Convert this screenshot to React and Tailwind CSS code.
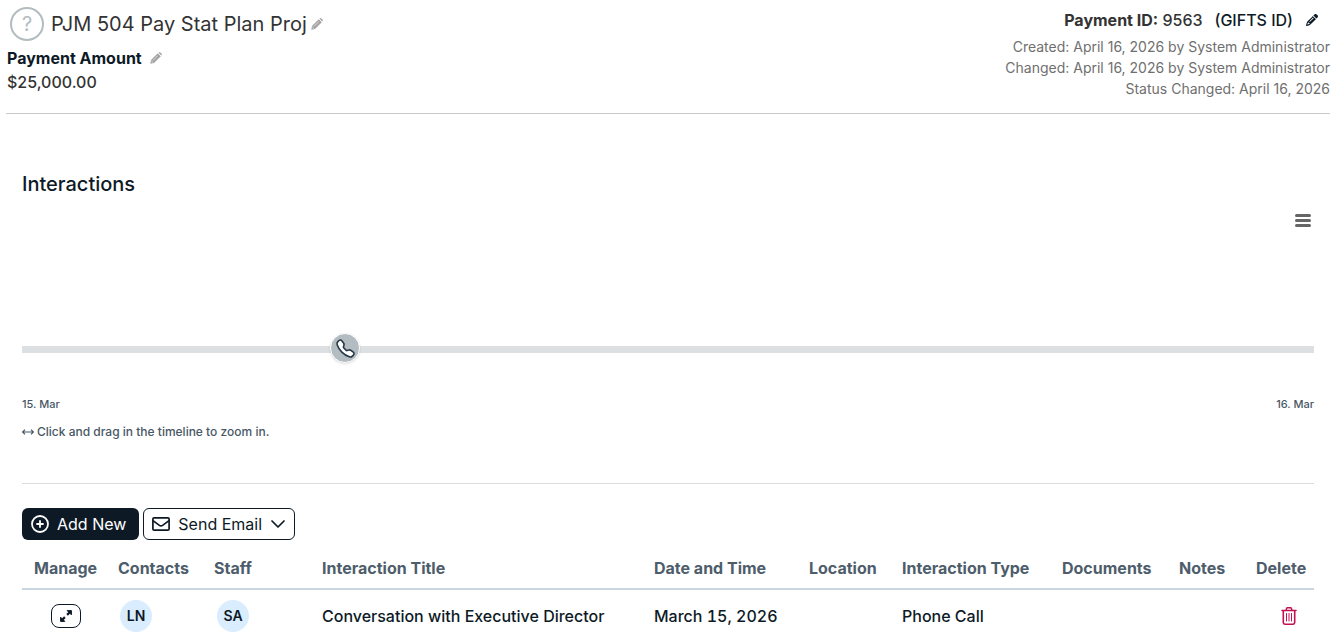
import { BsTelephoneFill } from 'react-icons/bs'
import { FaPencil } from 'react-icons/fa6'

const interactions = [
  {
    id: 1,
    contact: 'LN',
    staff: 'SA',
    title: 'Conversation with Executive Director',
    date: 'March 15, 2026',
    location: '',
    type: 'Phone Call',
  },
]

const history = [
  'Created: April 16, 2026 by System Administrator',
  'Changed: April 16, 2026 by System Administrator',
  'Status Changed: April 16, 2026',
]

function PencilIcon() {
  return (
    <svg viewBox="0 0 12 12" className="h-3 w-3" aria-hidden="true">
      <path d="M0.3 11.7 1 8 7.8 1.2 10.8 4.2 4 11Z" fill="#a3a3a3" />
      <path d="M8.4 0.7 9 0.3Q9.8 -0.1 10.4 0.5L11.5 1.6Q12.1 2.2 11.7 3L11.3 3.6Z" fill="#a3a3a3" />
      <path d="M3 8.4 7.8 3.6M1.4 9 3 10.6M7.8 0.8 11.2 4.2" stroke="#fff" strokeWidth="0.6" fill="none" />
    </svg>
  )
}

function PlusCircleIcon() {
  return (
    <svg viewBox="0 0 18 18" className="h-[18px] w-[18px]" fill="none" stroke="currentColor" strokeWidth="1.8" strokeLinecap="round" aria-hidden="true">
      <circle cx="9" cy="9" r="8" />
      <path d="M9 6v6M6 9h6" />
    </svg>
  )
}

function EnvelopeIcon() {
  return (
    <svg viewBox="0 0 18 14" className="h-[14px] w-[18px]" fill="none" stroke="currentColor" strokeWidth="1.7" strokeLinejoin="round" aria-hidden="true">
      <rect x="0.9" y="0.9" width="16.2" height="12.2" rx="1.2" />
      <path d="M1 3.6 7.4 8.4Q9 9.5 10.6 8.4L17 3.6" />
    </svg>
  )
}

function ChevronIcon() {
  return (
    <svg viewBox="0 0 14 8" className="ml-px h-2 w-[14px]" fill="none" stroke="currentColor" strokeWidth="1.7" strokeLinecap="round" strokeLinejoin="round" aria-hidden="true">
      <path d="M1 1 7 7 13 1" />
    </svg>
  )
}

function ExpandIcon() {
  return (
    <svg viewBox="0 0 12 12" className="h-3 w-3" fill="currentColor" stroke="currentColor" strokeLinejoin="round" aria-hidden="true">
      <path d="M7.2 0.6H11.4V4.8Z" />
      <path d="M0.6 7.2V11.4H4.8Z" />
      <path d="M10 2 7.1 4.9M4.9 7.1 2 10" strokeWidth="2.2" fill="none" />
    </svg>
  )
}

function TrashIcon() {
  return (
    <svg viewBox="0 0 16 18" className="h-[18px] w-4" fill="none" stroke="currentColor" strokeLinecap="round" aria-hidden="true">
      <path d="M1 3.4H15M5 3.2 5.6 1.4Q5.8 0.8 6.4 0.8H9.6Q10.2 0.8 10.4 1.4L11 3.2" strokeWidth="1.5" />
      <path d="M2.3 3.8V15.6Q2.3 17.2 3.9 17.2H12.1Q13.7 17.2 13.7 15.6V3.8" strokeWidth="1.6" />
      <path d="M5.5 6.5V14M8 6.5V14M10.5 6.5V14" strokeWidth="1" />
    </svg>
  )
}

function Avatar({ initials }) {
  return (
    <span className="flex h-8 w-8 items-center justify-center rounded-full bg-[#d9edff] text-sm font-semibold">{initials}</span>
  )
}

function Header() {
  return (
    <header className="ml-[6px] mr-3 flex h-[114px] justify-between border-b border-[#c8c8c8] text-[#333]">
      <div className="pl-px pt-[6px]">
        <div className="flex h-[35px] items-center">
          <span className="ml-[3px] flex h-[34px] w-[34px] items-center justify-center rounded-full border-2 border-[#b3bcc0] text-xl font-normal text-[#b3bcc0]">?</span>
          <h1 className="ml-[7px] text-xl font-normal">PJM 504 Pay Stat Plan Proj</h1>
          <button type="button" aria-label="Edit name" className="ml-1">
            <PencilIcon />
          </button>
        </div>
        <div className="mt-[5px] flex h-6 items-center">
          <h2 className="font-bold text-[#0d1a26]">Payment Amount</h2>
          <button type="button" aria-label="Edit payment amount" className="ml-2">
            <PencilIcon />
          </button>
        </div>
        <div>$25,000.00</div>
      </div>
      <div className="pt-2 text-right">
        <div className="flex items-center justify-end pr-3">
          <span><b>Payment ID:</b> 9563</span>
          <span className="ml-3 text-[#0d1a26]">(GIFTS ID)</span>
          <button type="button" aria-label="Edit payment ID" className="ml-[13px] text-[#0d1a26]">
            <FaPencil className="h-3 w-3" />
          </button>
        </div>
        <div className="mt-1 text-sm font-normal leading-[21px] text-[#6f6f6f]">
          {history.map((line) => (
            <div key={line}>{line}</div>
          ))}
        </div>
      </div>
    </header>
  )
}

function Timeline() {
  return (
    <div className="text-[#485766]">
      <div className="mt-4 flex justify-end pr-[3px]">
        <button type="button" aria-label="Chart menu" className="flex w-4 flex-col gap-[2px]">
          <span className="h-[3px] rounded-full bg-[#666]" />
          <span className="h-[3px] rounded-full bg-[#666]" />
          <span className="h-[3px] rounded-full bg-[#666]" />
        </button>
      </div>
      <div className="mt-[108px] flex h-[29px] items-center">
        <div className="relative h-[7px] w-full bg-[#dce0e3]">
          <button
            type="button"
            aria-label="Phone Call"
            className="absolute -top-[13px] left-1/4 flex h-[30px] w-[30px] -translate-x-1/2 items-center justify-center rounded-full border border-white bg-[#b3bcc0] shadow"
          >
            <BsTelephoneFill className="h-[17px] w-[17px] overflow-visible fill-white stroke-[#263746] stroke-[1.5px]" />
          </button>
        </div>
      </div>
      <div className="mt-8 flex justify-between text-[11px] leading-4">
        <span>15. Mar</span>
        <span>16. Mar</span>
      </div>
      <p className="mt-3 flex items-center gap-[3px] text-xs">
        <svg viewBox="0 0 12 6" className="h-[6px] w-3" fill="none" stroke="currentColor" aria-hidden="true">
          <path d="M0.8 3H11.2M3 0.6 0.6 3 3 5.4M9 0.6 11.4 3 9 5.4" strokeWidth="1.2" />
        </svg>
        Click and drag in the timeline to zoom in.
      </p>
    </div>
  )
}

function InteractionTable() {
  return (
    <table className="mt-[7px] w-full table-fixed text-left">
      <colgroup>
        <col className="w-[84px]" />
        <col className="w-[96px]" />
        <col className="w-[108px]" />
        <col />
        <col className="w-[155px]" />
        <col className="w-[93px]" />
        <col className="w-[160px]" />
        <col className="w-[117px]" />
        <col className="w-[77px]" />
        <col className="w-[70px]" />
      </colgroup>
      <thead>
        <tr className="h-[42px] border-b-2 border-[#c9d5e1] text-[#4d5d6b]">
          <th className="pl-3">Manage</th>
          <th className="pl-3">Contacts</th>
          <th className="pl-3">Staff</th>
          <th className="pl-3">Interaction Title</th>
          <th className="pl-3">Date and Time</th>
          <th className="pl-3">Location</th>
          <th className="pl-3">Interaction Type</th>
          <th className="pl-3">Documents</th>
          <th className="pl-3">Notes</th>
          <th className="pl-3">Delete</th>
        </tr>
      </thead>
      <tbody>
        {interactions.map((row) => (
          <tr key={row.id} className="h-[53px]">
            <td className="pl-[29px]">
              <button type="button" aria-label="Open interaction" className="flex h-6 w-[30px] items-center justify-center rounded-lg border border-[#0d1a26]">
                <ExpandIcon />
              </button>
            </td>
            <td className="pl-[14px]"><Avatar initials={row.contact} /></td>
            <td className="pl-[15px]"><Avatar initials={row.staff} /></td>
            <td className="pl-3">{row.title}</td>
            <td className="pl-3 tabular-nums">{row.date}</td>
            <td className="pl-3">{row.location}</td>
            <td className="pl-3">{row.type}</td>
            <td />
            <td />
            <td className="pl-[37px]">
              <button type="button" aria-label="Delete interaction" className="flex text-[#c2124f]">
                <TrashIcon />
              </button>
            </td>
          </tr>
        ))}
      </tbody>
    </table>
  )
}

export default function App() {
  return (
    <div className="bg-white font-['Inter',sans-serif] text-base font-medium text-[#0d1a26]">
      <Header />
      <main className="pl-[22px] pr-7 pt-14">
        <h2 className="text-xl">Interactions</h2>
        <Timeline />
        <div className="mt-[43px] flex gap-1 border-t border-[#dcdcdc] pt-6 font-normal">
          <button type="button" className="flex h-8 items-center gap-2 rounded-md bg-[#0d1a26] pl-[9px] pr-[13px] text-white">
            <PlusCircleIcon />
            Add New
          </button>
          <button type="button" className="flex h-8 items-center gap-2 rounded-md border border-[#0d1a26] pl-2 pr-[9px]">
            <EnvelopeIcon />
            Send Email
            <ChevronIcon />
          </button>
        </div>
        <InteractionTable />
      </main>
    </div>
  )
}
